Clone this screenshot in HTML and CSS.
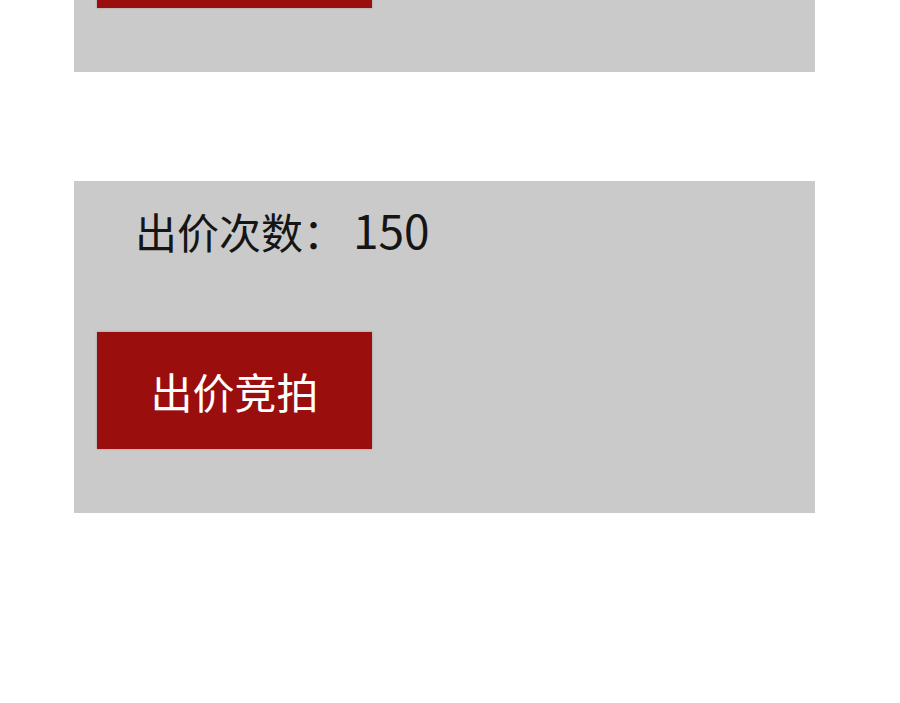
FILE: index.html
```html
<!DOCTYPE html>
<html lang="zh-CN">
<head>
    <meta charset="UTF-8">
    <meta name="viewport" content="width=device-width, initial-scale=1.0">
    <title>出价竞拍</title>
    <link rel="stylesheet" href="styles.css">
</head>
<body>
    <div class="list">
        <!-- previous item, scrolled mostly out of view -->
        <div class="item">
            <div class="count"></div>
            <div class="bid"></div>
        </div>
        <div class="item">
            <div class="count">出价次数：<span class="num">150</span></div>
            <button class="bid">出价竞拍</button>
        </div>
    </div>
</body>
</html>
```

FILE: styles.css
```css
*{
    margin: 0;
    padding: 0;
    box-sizing: border-box;
}
body{
    background: #fff;
    font-family: "Noto Sans CJK SC", "Noto Sans", sans-serif;
}
.list{
    width: 741px;
    margin-left: 74px;
    /* page is scrolled down a bit */
    margin-top: -260px;
}
.item{
    background: #cacaca;
    padding: 17px 23px 64px;
    margin-bottom: 109px;
}
.count{
    height: 62px;
    font-size: 42px;
    line-height: 62px;
    color: #151515;
    padding-left: 38px;
}
.count .num{
    font-size: 46px;
    margin-left: 8px;
}
.bid{
    display: block;
    margin-top: 72px;
    width: 275px;
    height: 117px;
    border: none;
    background: #9a0e0e;
    box-shadow: 0 0 2px rgba(0,0,0,0.25);
    color: #fff;
    font-family: "Noto Sans CJK SC", "Noto Sans", sans-serif;
    font-size: 42px;
}
```
